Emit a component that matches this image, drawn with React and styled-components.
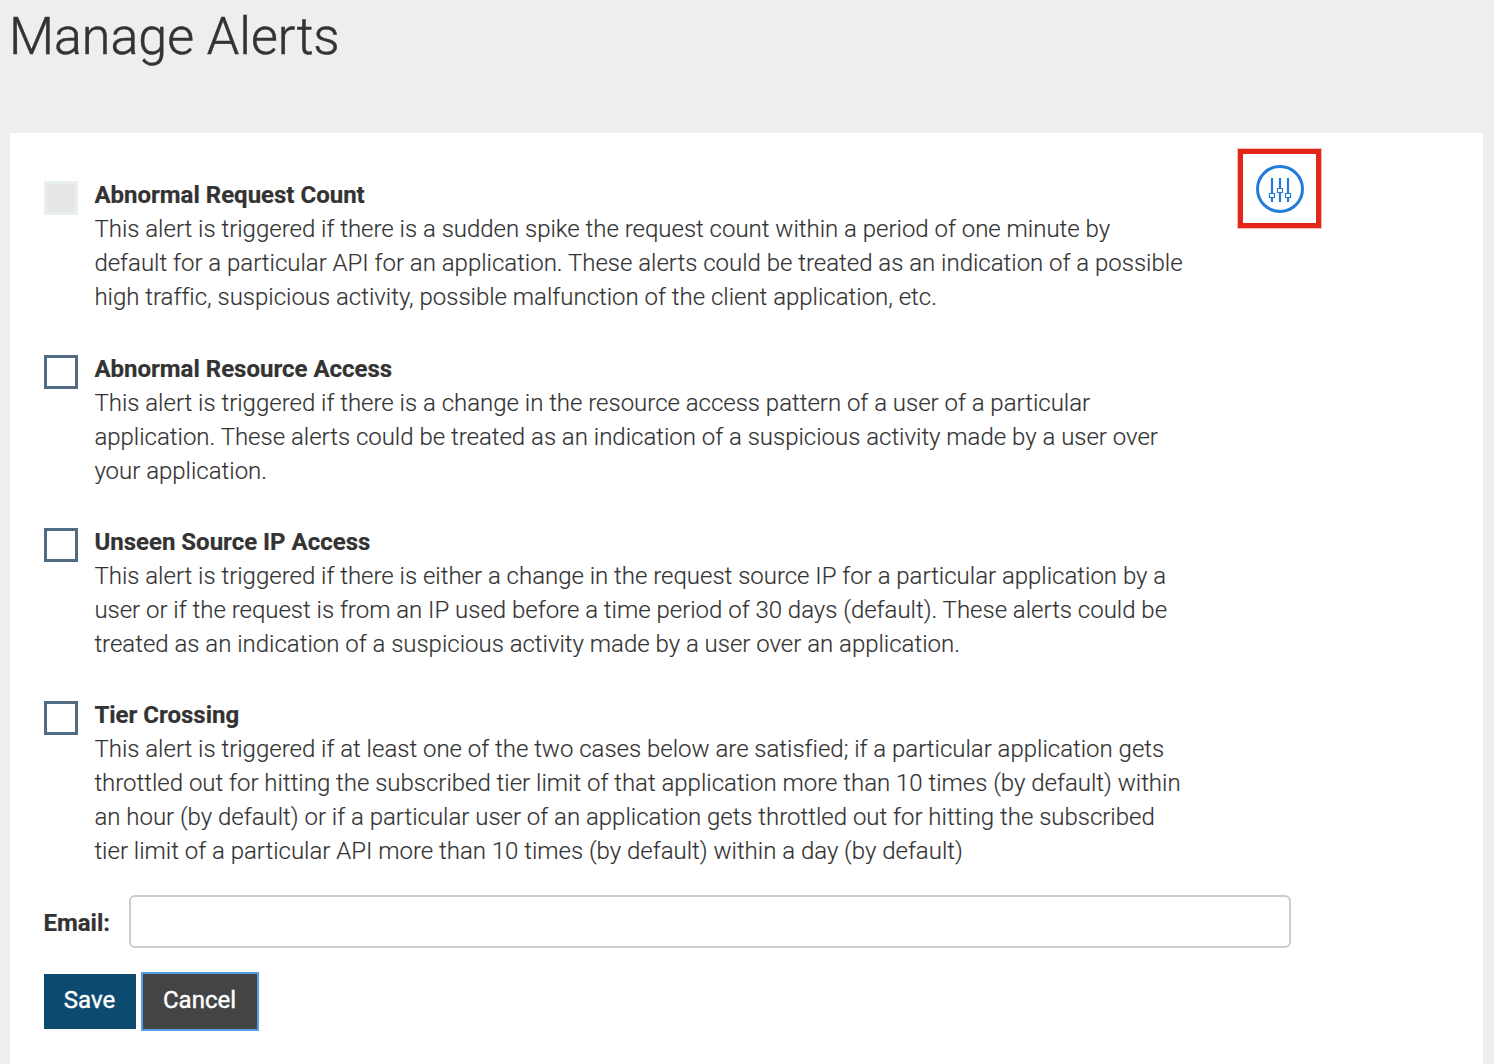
import React from "react";
import styled, { createGlobalStyle } from "styled-components";

const Global = createGlobalStyle`
  * { box-sizing: border-box; }
  body { margin: 0; background: #eeeeee; color: #333333; font-family: Roboto, sans-serif; font-size: 24px; line-height: 34px; font-weight: 300; }
`;
const Page = styled.div`
  height: 1064px; overflow: hidden; padding: 0 11px 0 10px; display: flex; flex-direction: column;
`;
const Header = styled.header`
  height: 99px; margin-bottom: 34px; padding-top: 6px; border-bottom: 1px solid #ebebeb;
`;
const Title = styled.h1`
  margin: 0 0 0 -1px; font-size: 52px; line-height: 62px; font-weight: 300; white-space: nowrap;
  -webkit-text-stroke: 0.5px #333333;
`;
const Panel = styled.main`
  flex: 1; background: #fff; padding: 16px 34px 0; display: flex; flex-direction: column;
`;
const Top = styled.div`
  display: flex; align-items: flex-start;
`;
const List = styled.div`
  width: 1194px; padding-top: 29px; flex: none;
`;
const Alert = styled.section`
  display: flex; gap: 16.4px; height: ${(p) => p.$height}px;
`;
const Check = styled.span`
  flex: none; width: 34px; height: 34px; margin-top: 3px;
  border: 3px solid ${(p) => (p.$disabled ? "#e9eef0" : "#516b83")};
  background: ${(p) => (p.$disabled ? "#e6e6e6" : "#fff")};
`;
const Name = styled.h2`
  margin: 0; font-size: 24px; line-height: 34px; font-weight: 700;
  -webkit-text-stroke: 0.2px #333333;
`;
const Line = styled.div`
  white-space: nowrap; width: max-content; letter-spacing: -0.012px;
  -webkit-text-stroke: 0.15px #333333;
`;
const Configure = styled.button`
  width: 83px; height: 79px; padding: 0; border: 5px solid #e42618; background: #fff;
  box-shadow: 0 0 0 1px rgba(228, 38, 24, 0.3);
  display: flex; align-items: center; justify-content: center;
`;
const Icon = styled.svg`
  display: block; overflow: visible;
`;
const EmailRow = styled.div`
  display: flex; align-items: center; height: 53px;
`;
const Label = styled.label`
  width: 85px; padding-top: 2px; margin-left: -0.6px; margin-right: 0.6px; font-weight: 700; white-space: nowrap;
  -webkit-text-stroke: 0.2px #333333;
`;
const Input = styled.input`
  width: 1162px; height: 53px; border: 2px solid #cccccc; border-radius: 6px; background: #fff; padding: 0 16px; font: inherit;
`;
const Actions = styled.div`
  display: flex; align-items: center; gap: 5px; margin-top: 24px;
`;
const Button = styled.button`
  width: ${(p) => p.$width}px; height: ${(p) => p.$height}px; padding: 0 1px 4px 0; font: 400 24px/34px Roboto, sans-serif; color: #fff;
  background: ${(p) => p.$bg}; border: ${(p) => p.$border || "0"};
  -webkit-text-stroke: 0.4px #fff;
`;

const alerts = [
  { name: "Abnormal Request Count", height: 174, disabled: true, lines: [
    "This alert is triggered if there is a sudden spike the request count within a period of one minute by",
    "default for a particular API for an application. These alerts could be treated as an indication of a possible",
    "high traffic, suspicious activity, possible malfunction of the client application, etc."] },
  { name: "Abnormal Resource Access", height: 173, lines: [
    "This alert is triggered if there is a change in the resource access pattern of a user of a particular",
    "application. These alerts could be treated as an indication of a suspicious activity made by a user over",
    "your application."] },
  { name: "Unseen Source IP Access", height: 173, lines: [
    "This alert is triggered if there is either a change in the request source IP for a particular application by a",
    "user or if the request is from an IP used before a time period of 30 days (default). These alerts could be",
    "treated as an indication of a suspicious activity made by a user over an application."] },
  { name: "Tier Crossing", height: 197, lines: [
    "This alert is triggered if at least one of the two cases below are satisfied; if a particular application gets",
    "throttled out for hitting the subscribed tier limit of that application more than 10 times (by default) within",
    "an hour (by default) or if a particular user of an application gets throttled out for hitting the subscribed",
    "tier limit of a particular API more than 10 times (by default) within a day (by default)"] },
];

const SlidersIcon = () => (
  <Icon width="49" height="49" viewBox="0 0 49 49" fill="none" stroke="#257bd9">
    <circle cx="25" cy="25" r="22.5" strokeWidth="3" />
    <path strokeWidth="2.2" d="M17 14v15M17 34v4M25 14v10M25 29v9M33 14v15M33 34v4" />
    <path strokeWidth="1.2" d="M14.5 29.5h5v4h-5zM22.5 24.5h5v4h-5zM30.5 29.5h5v4h-5z" />
  </Icon>
);

export default function App() {
  return (
    <Page>
      <Global />
      <Header><Title>Manage Alerts</Title></Header>
      <Panel>
        <Top>
          <List>
            {alerts.map((a) => (
              <Alert key={a.name} $height={a.height}>
                <Check $disabled={a.disabled} />
                <div>
                  <Name>{a.name}</Name>
                  {a.lines.map((l) => <Line key={l}>{l}</Line>)}
                </div>
              </Alert>
            ))}
          </List>
          <Configure aria-label="Configure"><SlidersIcon /></Configure>
        </Top>
        <EmailRow>
          <Label htmlFor="email">Email:</Label>
          <Input id="email" />
        </EmailRow>
        <Actions>
          <Button $width={92} $height={55} $bg="#0d4a70">Save</Button>
          <Button $width={118} $height={59} $bg="#444444" $border="2px solid #559ee8">Cancel</Button>
        </Actions>
      </Panel>
    </Page>
  );
}
